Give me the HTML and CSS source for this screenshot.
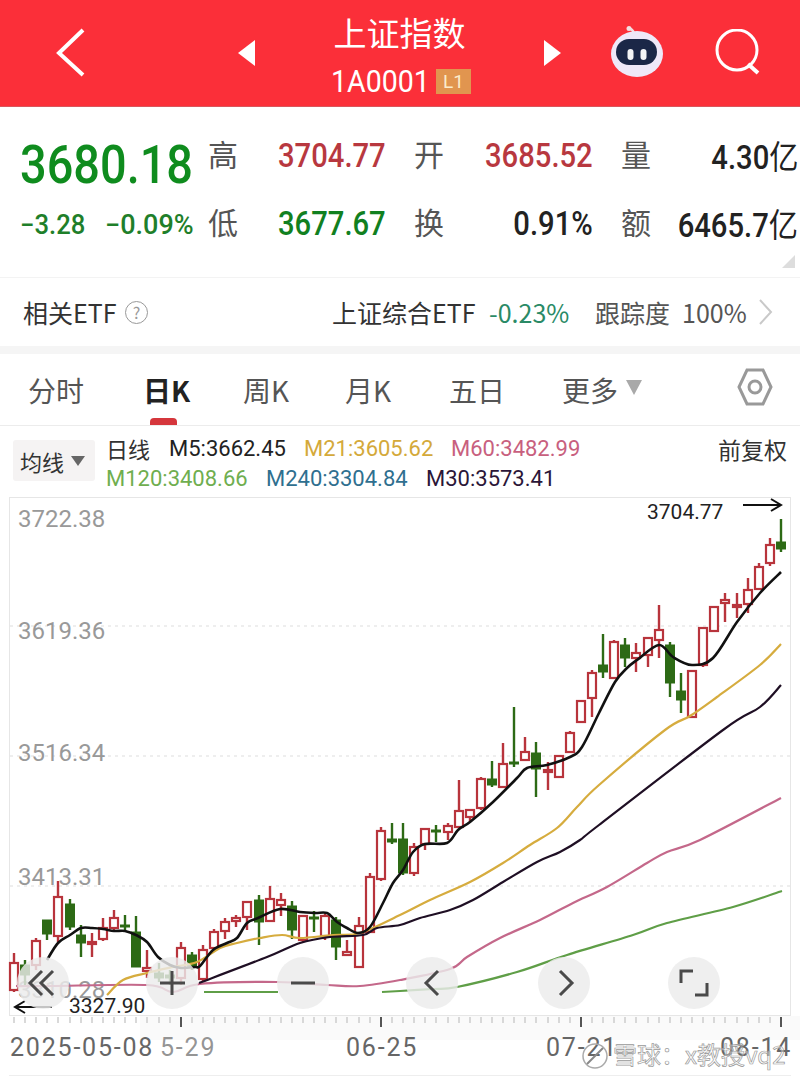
FILE: index.html
```html
<!DOCTYPE html>
<html lang="zh-CN">
<head>
    <meta charset="UTF-8">
    <meta name="viewport" content="width=device-width, initial-scale=1.0">
    <title>上证指数</title>
    <link rel="stylesheet" href="styles.css">
</head>
<body>
    <header class="topbar">
        <svg class="back-icon" width="30" height="50" viewBox="0 0 30 50"><path d="M27 2 L3 25 L27 47" fill="none" stroke="#fff" stroke-width="4"/></svg>
        <svg class="prev-icon" width="18" height="28" viewBox="0 0 18 28"><polygon points="0,14 17,1 17,27" fill="#fff"/></svg>
        <div class="title-block">
            <div class="title">上证指数</div>
            <div class="code-row"><span class="code">1A0001</span><span class="badge">L1</span></div>
        </div>
        <svg class="next-icon" width="18" height="28" viewBox="0 0 18 28"><polygon points="0,1 17,14 0,27" fill="#fff"/></svg>
        <svg class="robot-icon" width="54" height="52" viewBox="0 0 54 52">
            <path d="M24 8 C24 4 21 3 19 2" fill="none" stroke="#f3dfe2" stroke-width="2.5"/>
            <circle cx="19" cy="2.5" r="2.5" fill="#f3dfe2"/>
            <ellipse cx="27" cy="28" rx="26" ry="23" fill="#efe8f8"/>
            <rect x="6" y="13" width="41" height="26" rx="13" fill="#1b2747"/>
            <rect x="17.500" y="23" width="6" height="11" rx="3" fill="#f4f4f6"/>
            <rect x="30.500" y="23" width="6" height="11" rx="3" fill="#f4f4f6"/>
        </svg>
        <svg class="search-icon" width="46" height="46" viewBox="0 0 46 46"><circle cx="22" cy="21" r="20" fill="none" stroke="#fff" stroke-width="3"/><path d="M33 35 L43 44" stroke="#fff" stroke-width="4"/></svg>
    </header>

    <section class="quote">
        <div class="quote-main">
            <div class="price"><span class="squeeze">3680.18</span></div>
            <div class="change"><span class="squeeze">−3.28</span><span class="squeeze pct">−0.09%</span></div>
        </div>
        <div class="quote-grid">
            <div class="cell"><span class="label">高</span><span class="value up">3704.77</span></div>
            <div class="cell"><span class="label">开</span><span class="value up">3685.52</span></div>
            <div class="cell"><span class="label">量</span><span class="value">4.30<i>亿</i></span></div>
            <div class="cell"><span class="label">低</span><span class="value down">3677.67</span></div>
            <div class="cell"><span class="label">换</span><span class="value">0.91%</span></div>
            <div class="cell"><span class="label">额</span><span class="value">6465.7<i>亿</i></span></div>
        </div>
        <div class="corner"></div>
    </section>

    <section class="etf-row">
        <span class="etf-name">相关ETF</span>
        <span class="help">?</span>
        <span class="etf-fund">上证综合ETF</span>
        <span class="etf-pct">-0.23%</span>
        <span class="etf-track">跟踪度</span>
        <span class="etf-track-val">100%</span>
        <svg class="etf-more" width="14" height="26" viewBox="0 0 14 26"><path d="M1 1 L12 13 L1 25" fill="none" stroke="#c9c9c9" stroke-width="2"/></svg>
    </section>

    <nav class="tabs">
        <span class="tab tab-day">分时</span>
        <span class="tab tab-active">日K</span>
        <span class="tab tab-week">周K</span>
        <span class="tab tab-month">月K</span>
        <span class="tab tab-five">五日</span>
        <span class="tab tab-more">更多</span>
        <span class="tab-arrow"></span>
        <svg class="hex-icon" width="36" height="40" viewBox="0 0 36 40"><polygon points="10,3 26,3 34,20 26,37 10,37 2,20" fill="none" stroke="#999" stroke-width="3"/><circle cx="18" cy="20" r="6" fill="none" stroke="#999" stroke-width="3"/></svg>
    </nav>

    <section class="legend">
        <div class="ma-button">均线<span class="ma-arrow"></span></div>
        <div class="legend-lines">
            <div class="legend-row">
                <span class="daily">日线</span>
                <span class="ma ma5">M5:3662.45</span>
                <span class="ma ma21">M21:3605.62</span>
                <span class="ma ma60">M60:3482.99</span>
            </div>
            <div class="legend-row">
                <span class="ma ma120">M120:3408.66</span>
                <span class="ma ma240">M240:3304.84</span>
                <span class="ma ma30">M30:3573.41</span>
            </div>
        </div>
        <div class="adjust">前复权</div>
    </section>

    <svg id="chart" class="chart" width="800" height="583" viewBox="0 497 800 583"></svg>

    <script src="chart.js"></script>
</body>
</html>
```

FILE: styles.css
```css
* {
    box-sizing: border-box;
}
html, body {
    margin: 0;
    padding: 0;
}
body {
    width: 800px;
    height: 1080px;
    overflow: hidden;
    background-color: #fff;
    color: #333;
    font-family: "Noto Sans CJK SC", Roboto, sans-serif;
}

/* top red bar */
.topbar {
    height: 107px;
    display: flex;
    align-items: center;
    background-color: #fb2f39;
    border-bottom: 1px solid #d9565c;
    color: #fff;
}
.back-icon {
    margin-left: 56px;
}
.prev-icon {
    margin-left: 152px;
}
.title-block {
    width: 140px;
    margin-left: 76px;
    display: flex;
    flex-direction: column;
    align-items: center;
}
.title {
    font-size: 33px;
    line-height: 40px;
    margin-left: -5px;
    white-space: nowrap;
}
.code-row {
    display: flex;
    align-items: center;
    gap: 10px;
    margin-top: 17px;
}
.code {
    font-family: Roboto, sans-serif;
    font-size: 31px;
    line-height: 26px;
    width: 95px;
    margin-left: -2px;
    white-space: nowrap;
    display: inline-block;
    transform: scaleX(.92);
    transform-origin: left;
}
.badge {
    width: 35px;
    height: 25px;
    background-color: #e1954f;
    color: #fbeccb;
    font-family: Roboto, sans-serif;
    font-size: 19px;
    line-height: 25px;
    text-align: center;
}
.next-icon {
    margin-left: 72px;
}
.robot-icon {
    margin-left: 48px;
    margin-top: -3px;
}
.search-icon {
    margin-left: 51px;
    margin-top: -3px;
}

/* quote block */
.quote {
    position: relative;
    height: 171px;
    display: flex;
    border-bottom: 1px solid #f3f3f3;
}
.quote-main {
    width: 208px;
    padding-left: 20px;
    padding-top: 25px;
    color: #0f8c1e;
}
.squeeze {
    display: inline-block;
    transform-origin: left;
    font-family: Roboto, sans-serif;
    white-space: nowrap;
}
.price {
    font-size: 53px;
    line-height: 56px;
    height: 56px;
}
.price .squeeze {
    font-weight: 500;
    transform: scaleX(.885);
}
.change {
    margin-top: 22px;
    display: flex;
    font-size: 27px;
    line-height: 30px;
    color: #1f7f2a;
}
.change .squeeze {
    width: 85px;
    font-weight: 500;
    transform: scaleX(.95);
}
.change .pct {
    width: 90px;
    transform: scaleX(1);
}
.quote-grid {
    display: grid;
    grid-template-columns: 178px 179px 177px;
    column-gap: 28px;
    row-gap: 26px;
    padding-top: 27px;
    align-content: start;
}
.cell {
    display: flex;
    justify-content: space-between;
    align-items: center;
    height: 42px;
}
.label {
    font-size: 30px;
    margin-top: -5px;
    color: #555;
}
.value {
    display: inline-block;
    font-family: Roboto, sans-serif;
    font-size: 33px;
    font-weight: 500;
    color: #222;
    white-space: nowrap;
    transform: scaleX(.885);
    transform-origin: right;
}
.value i {
    font-family: "Noto Sans CJK SC", sans-serif;
    font-style: normal;
    font-weight: 400;
}
.up {
    color: #b8383f;
}
.down {
    color: #11801f;
}
.corner {
    position: absolute;
    right: 5px;
    top: 148px;
    width: 0;
    height: 0;
    border-left: 13px solid transparent;
    border-bottom: 13px solid #ddd;
}

/* related etf */
.etf-row {
    height: 76px;
    display: flex;
    align-items: center;
    border-bottom: 8px solid #f5f5f5;
    font-size: 25px;
    color: #333;
    white-space: nowrap;
}
.etf-name {
    margin-left: 23px;
    width: 94px;
}
.help {
    margin-left: 8px;
    width: 23px;
    height: 23px;
    border: 1px solid #999;
    border-radius: 50%;
    color: #999;
    font-size: 16px;
    line-height: 21px;
    text-align: center;
}
.etf-fund {
    margin-left: 184px;
    width: 143px;
}
.etf-pct {
    margin-left: 14px;
    width: 78px;
    color: #2a8a66;
}
.etf-track {
    margin-left: 28px;
    width: 73px;
    color: #555;
}
.etf-track-val {
    margin-left: 14px;
    width: 62px;
    color: #555;
}
.etf-more {
    margin-left: 15px;
}

/* period tabs */
.tabs {
    position: relative;
    height: 72px;
    display: flex;
    align-items: center;
    border-bottom: 1px solid #ececec;
    font-size: 28px;
    color: #555;
    white-space: nowrap;
}
.tab-day {
    margin-left: 28px;
    width: 57px;
}
.tab-active {
    margin-left: 58px;
    width: 46px;
    color: #222;
    font-weight: 700;
}
.tab-active::after {
    content: "";
    position: absolute;
    left: 150px;
    bottom: 0;
    width: 27px;
    height: 7px;
    border-radius: 4px 4px 0 0;
    background-color: #d5363c;
}
.tab-week {
    margin-left: 54px;
    width: 48px;
}
.tab-month {
    margin-left: 54px;
    width: 48px;
}
.tab-five {
    margin-left: 56px;
    width: 56px;
}
.tab-more {
    margin-left: 57px;
    width: 58px;
}
.tab-arrow {
    margin-left: 6px;
    margin-top: -5px;
    width: 0;
    height: 0;
    border-left: 8px solid transparent;
    border-right: 8px solid transparent;
    border-top: 15px solid #a9a9a9;
}
.hex-icon {
    margin-left: 95px;
    margin-top: -5px;
}

/* moving average legend */
.legend {
    height: 71px;
    display: flex;
    white-space: nowrap;
}
.ma-button {
    margin: 14px 0 0 13px;
    width: 82px;
    height: 41px;
    display: flex;
    align-items: center;
    padding-left: 7px;
    background-color: #f5f3f3;
    border-radius: 3px;
    font-size: 22px;
    color: #333;
}
.ma-arrow {
    margin-left: 7px;
    width: 0;
    height: 0;
    border-left: 7px solid transparent;
    border-right: 7px solid transparent;
    border-top: 10px solid #666;
}
.legend-lines {
    margin: 7px 0 0 11px;
    width: 612px;
}
.legend-row {
    display: flex;
    height: 30px;
    align-items: center;
    font-family: Roboto, sans-serif;
    font-size: 22px;
}
.daily {
    font-family: "Noto Sans CJK SC", sans-serif;
    width: 63px;
    color: #333;
}
.ma5 {
    width: 135px;
    color: #222;
}
.ma21 {
    width: 147px;
    color: #d4a93a;
}
.ma60 {
    color: #c8607e;
}
.ma120 {
    width: 160px;
    color: #6fae4f;
}
.ma240 {
    width: 160px;
    color: #2f6f8f;
}
.ma30 {
    color: #2b1638;
}
.adjust {
    margin-top: 8px;
    font-size: 23px;
    line-height: 30px;
    color: #333;
}

/* chart canvas */
.chart {
    display: block;
}
.axis-label {
    font-family: Roboto, sans-serif;
    font-size: 24px;
    fill: #999;
}
.mark-label {
    font-family: Roboto, sans-serif;
    font-size: 21px;
    fill: #222;
}
.date-label {
    font-family: Roboto, sans-serif;
    font-size: 25px;
    letter-spacing: 1.8px;
    fill: #666;
}
.watermark {
    font-family: "Noto Sans CJK SC", sans-serif;
    font-size: 24px;
    fill: #fff;
    fill-opacity: .45;
    stroke: #999;
    stroke-width: .7;
}
```

FILE: chart.js
```js
var svg = document.getElementById("chart");
var NS = "http://www.w3.org/2000/svg";

function add(tag, attrs, text) {
    var el = document.createElementNS(NS, tag);
    for (var k in attrs) el.setAttribute(k, attrs[k]);
    if (text) el.textContent = text;
    svg.appendChild(el);
    return el;
}

// smooth curve through the points, the moving averages are not angular
function line(points, color, width) {
    var p = points.split(" ").map(function (s) { return s.split(",").map(Number); });
    var d = "M" + p[0][0] + " " + p[0][1];
    for (var i = 0; i < p.length - 1; i++) {
        var a = p[i - 1] || p[i], b = p[i], c = p[i + 1], e = p[i + 2] || c;
        d += " C" + (b[0] + (c[0] - a[0]) / 6) + " " + (b[1] + (c[1] - a[1]) / 6) + " " +
            (c[0] - (e[0] - b[0]) / 6) + " " + (c[1] - (e[1] - b[1]) / 6) + " " + c[0] + " " + c[1];
    }
    add("path", { d: d, fill: "none", stroke: color, "stroke-width": width || 2.2 });
}

// r or g, body top, body bottom, wick top, wick bottom (page pixels)
var candles = [
    ["r",963,990,953,992],["g",965,975,960,985],["r",941,965,938,970],["g",920,934,920,940],["r",897,936,881,942],
    ["g",904,927,899,930],["g",935,943,925,957],["r",942,944,933,957],["r",928,939,918,941],["r",918,928,910,930],
    ["g",925,927,915,932],["g",932,967,916,967],["r",968,971,950,978],["g",973,978,963,982],["g",975,978,970,985],
    ["r",948,978,942,985],["g",955,966,952,970],["r",950,979,945,982],["r",932,948,929,950],["r",922,931,918,939],
    ["r",918,921,915,927],["r",902,917,901,930],["g",900,922,895,945],["r",899,921,886,921],["r",900,905,893,916],
    ["g",906,930,901,939],["r",916,940,916,942],["g",917,919,911,932],["r",916,936,914,940],["g",920,947,917,960],
    ["r",952,955,940,955],["r",926,967,917,968],["r",877,932,873,932],["r",831,879,827,881],["g",839,842,823,844],
    ["g",839,873,823,875],["r",847,873,843,876],["r",829,844,828,850],["g",830,832,825,842],["r",826,832,823,840],
    ["r",811,827,780,828],["r",810,817,809,822],["r",779,808,777,810],["g",779,785,761,787],["r",764,787,743,787],
    ["g",762,764,707,767],["r",752,760,737,760],["g",753,769,742,797],["r",770,772,762,790],["r",756,777,756,777],
    ["r",733,752,731,753],["r",701,722,700,723],["r",673,698,670,717],["g",665,672,634,678],["r",642,678,640,679],
    ["g",645,658,638,667],["r",653,658,643,672],["r",638,655,637,667],["r",630,640,605,658],["g",645,683,642,697],
    ["g",691,700,673,713],["r",671,717,671,717],["r",628,665,628,667],["r",607,631,606,632],["r",600,603,593,622],
    ["r",605,607,593,618],["r",590,604,578,613],["r",567,589,563,590],["r",545,563,538,566],["g",542,549,519,552]
];

// chart frame
add("rect", { x: 9.5, y: 497.5, width: 781, height: 518, fill: "#fff", stroke: "#e6e6e6" });

// dotted grid
[626, 756, 886].forEach(function (y) {
    add("line", { x1: 10, y1: y, x2: 790, y2: y, stroke: "#ddd", "stroke-dasharray": "3 4" });
});

// axis labels sit under the candles
[["3722.38", 527], ["3619.36", 639], ["3516.34", 761], ["3413.31", 885], ["3310.28", 998]].forEach(function (a) {
    add("text", { x: 18, y: a[1], "class": "axis-label" }, a[0]);
});

candles.forEach(function (c, i) {
    var x = Math.round(14 + i * 11.116);
    var color = c[0] == "r" ? "#b8343c" : "#2d6a15";
    add("line", { x1: x, y1: c[3], x2: x, y2: c[4], stroke: color, "stroke-width": 2.4 });
    if (c[0] == "r") {
        add("rect", { x: x - 4, y: c[1], width: 8, height: c[2] - c[1], fill: "#fff", stroke: color, "stroke-width": 2.2 });
    } else {
        add("rect", { x: x - 4.5, y: c[1], width: 9, height: c[2] - c[1], fill: color, stroke: color });
    }
});

// moving averages
line("204,992 278,992", "#5f9e47");
line("382,992 400,991 433,989 457,987 517,972 567,955 633,935 667,923 733,907 782,891", "#5f9e47");
line("16,986 50,986 147,985 173,992 200,984 277,982 327,985 360,986 400,980 450,969 467,957 500,938 540,920 573,903 607,887 647,863 667,852 700,840 781,798", "#c4688a");
line("107,995 123,980 147,973 173,967 197,962 220,948 237,943 260,938 282,935 300,938 333,935 360,933 400,915 430,900 470,882 503,863 530,845 557,828 577,807 599,785 665,730 690,716 717,697 760,665 781,644", "#d6ac3e");
line("199,983 267,957 300,943 330,937 363,935 377,928 400,925 420,918 450,910 473,900 503,882 537,862 560,852 580,840 599,825 723,730 760,707 781,685", "#1f0f24");
line("47,960 58,943 70,935 81,928 92,928 103,929 114,931 125,931 136,935 147,942 158,957 170,965 181,968 195,967 200,966 213,950 227,943 237,938 247,923 258,918 280,909 300,912 315,913 327,913 337,922 347,928 358,933 370,927 383,903 393,883 403,870 413,852 425,844 447,843 458,830 470,822 493,802 517,778 527,768 547,765 570,757 582,747 599,713 615,682 627,668 637,660 659,645 673,657 692,665 713,658 737,622 760,593 781,572", "#111", 2.6);

// high and low marks
add("text", { x: 647, y: 519, "class": "mark-label" }, "3704.77");
add("path", { d: "M743 505 H781 M771 499 L781 505 L771 511", fill: "none", stroke: "#111", "stroke-width": 2 });
add("text", { x: 69, y: 1013, "class": "mark-label" }, "3327.90");
add("path", { d: "M52 1007 H15 M25 1001 L15 1007 L25 1013", fill: "none", stroke: "#111", "stroke-width": 2 });

// round controls over the chart
[43, 172, 303, 432, 564, 694].forEach(function (x) {
    add("circle", { cx: x, cy: 983, r: 26, fill: "#ececec", "fill-opacity": .82 });
});
function icon(d) {
    add("path", { d: d, fill: "none", stroke: "#4a4a4a", "stroke-width": 3 });
}
icon("M42 971 L30 983 L42 995 M53 971 L41 983 L53 995");
icon("M160 983 H185 M172 971 V995");
icon("M291 983 H315");
icon("M438 971 L426 983 L438 995");
icon("M560 971 L572 983 L560 995");
icon("M681 983 V971 H693 M707 983 V995 H695");

// time axis ticks
add("rect", { x: 140, y: 1016, width: 660, height: 24, fill: "#fafafa" });
for (var t = 0; t < 70; t++) {
    var tx = Math.round(14 + t * 11.116);
    add("line", { x1: tx, y1: 1017, x2: tx, y2: 1023, stroke: "#ccc", "stroke-width": 1.5 });
}
[181, 381, 581, 781].forEach(function (x) {
    add("line", { x1: x, y1: 1017, x2: x, y2: 1027, stroke: "#555", "stroke-width": 2 });
});

[["2025-05-08", 10], ["06-25", 346], ["07-21", 546], ["08-14", 720]].forEach(function (d) {
    add("text", { x: d[1], y: 1056, "class": "date-label" }, d[0]);
});
add("text", { x: 160, y: 1056, "class": "date-label", "fill-opacity": .7 }, "5-29");

// watermark
add("circle", { cx: 595, cy: 1056, r: 12, fill: "none", stroke: "#aaa", "stroke-width": 1.5 });
add("path", { d: "M587 1064 L603 1048", stroke: "#888", "stroke-width": 2 });
add("text", { x: 613, y: 1064, "class": "watermark" }, "雪球：x教授vq2");

// bottom line of the frame
add("line", { x1: 9, y1: 1075.5, x2: 791, y2: 1075.5, stroke: "#eee" });
```
